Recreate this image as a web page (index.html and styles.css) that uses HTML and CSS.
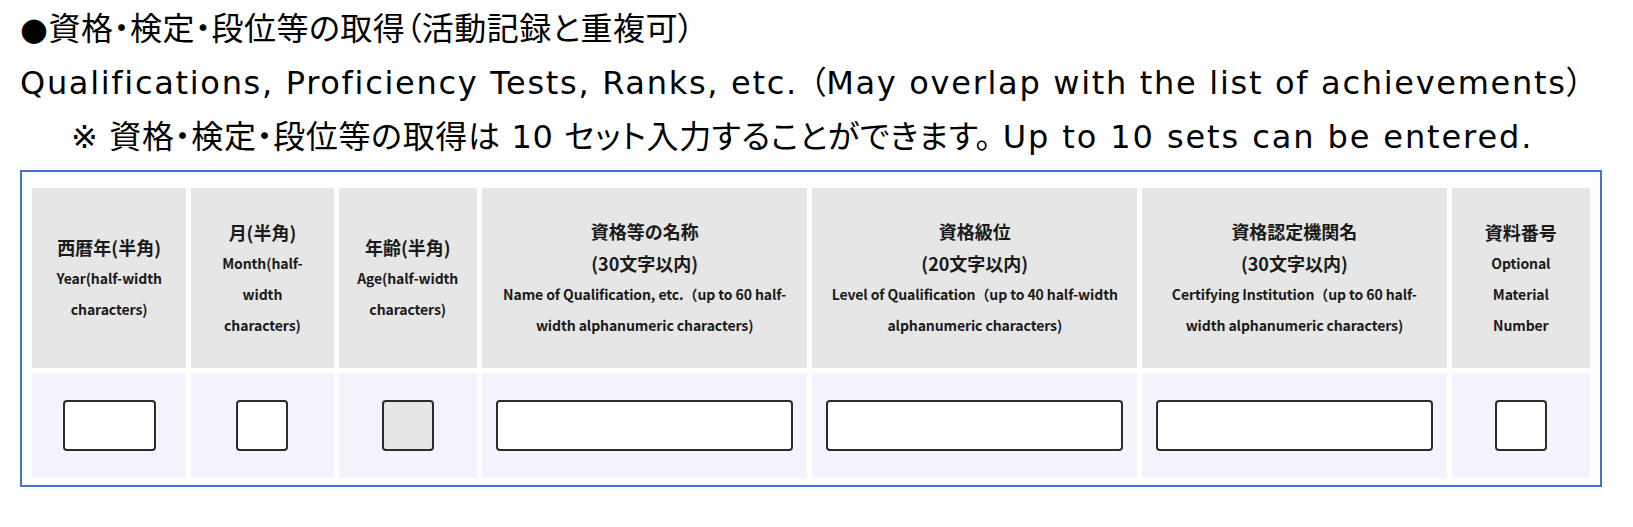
FILE: index.html
```html
<!DOCTYPE html>
<html lang="ja">
<head>
<meta charset="utf-8">
<title>資格・検定・段位等の取得</title>
<link rel="stylesheet" href="styles.css">
</head>
<body>
<div class="intro">
  <div class="line">●資格・検定・段位等の取得（活動記録と重複可）</div>
  <div class="line"><span class="lat">Qualifications, Proficiency Tests, Ranks, etc. </span>（<span class="lat">May overlap with the list of achievements</span>）</div>
  <div class="line note">※ 資格・検定・段位等の取得は 10 セット入力することができます。 <span class="lat">Up to 10 sets can be entered.</span></div>
</div>
<div class="box">
  <table class="grid">
    <colgroup>
      <col class="c1"><col class="c2"><col class="c3"><col class="c4"><col class="c5"><col class="c6"><col class="c7">
    </colgroup>
    <thead>
      <tr class="head">
        <th><span class="jp">西暦年(半角)</span><span class="en">Year(half-width<br>characters)</span></th>
        <th><span class="jp">月(半角)</span><span class="en">Month(half-<br>width<br>characters)</span></th>
        <th><span class="jp">年齢(半角)</span><span class="en">Age(half-width<br>characters)</span></th>
        <th><span class="jp">資格等の名称</span><span class="jp">(30文字以内)</span><span class="en">Name of Qualification, etc.（up to 60 half-<br>width alphanumeric characters)</span></th>
        <th><span class="jp">資格級位</span><span class="jp">(20文字以内)</span><span class="en">Level of Qualification（up to 40 half-width<br>alphanumeric characters)</span></th>
        <th><span class="jp">資格認定機関名</span><span class="jp">(30文字以内)</span><span class="en">Certifying Institution（up to 60 half-<br>width alphanumeric characters)</span></th>
        <th><span class="jp">資料番号</span><span class="en">Optional<br>Material<br>Number</span></th>
      </tr>
    </thead>
    <tbody>
      <tr class="row">
        <td><input class="in in-year" type="text"></td>
        <td><input class="in in-small" type="text"></td>
        <td><input class="in in-small" type="text" disabled></td>
        <td><input class="in in-wide" type="text"></td>
        <td><input class="in in-wide" type="text"></td>
        <td><input class="in in-wide" type="text"></td>
        <td><input class="in in-small" type="text"></td>
      </tr>
    </tbody>
  </table>
</div>
</body>
</html>
```
FILE: styles.css
```css
html, body {
  margin: 0;
  padding: 0;
  background: #ffffff;
}
body {
  padding: 2px 31px 0 20px;
  color: #000;
  font-family: "DejaVu Sans", "Noto Sans CJK JP", sans-serif;
}
.intro .line {
  font-size: 32px;
  line-height: 54px;
  letter-spacing: 0.5px;
  white-space: nowrap;
  font-feature-settings: "palt";
}
.intro .lat {
  letter-spacing: 1.7px;
}
.intro .note {
  padding-left: 51px;
  letter-spacing: 0.65px;
}
.intro .note .lat {
  letter-spacing: 1.9px;
}
.box {
  margin-top: 6px;
  border: 2px solid #4472c4;
  padding: 11px 5px 2px 5px;
}
.grid {
  width: 100%;
  table-layout: fixed;
  border-collapse: separate;
  border-spacing: 5px;
  font-family: "Noto Sans CJK JP", sans-serif;
}
.c1 { width: 154px; }
.c2 { width: 142px; }
.c3 { width: 138px; }
.c4 { width: 325px; }
.c5 { width: 324px; }
.c6 { width: 304px; }
.c7 { width: 138px; }
.head th {
  height: 180px;
  padding: 0 4px;
  background: #e6e6e6;
  text-align: center;
  vertical-align: middle;
  font-weight: 700;
  color: #1a1a1a;
}
.jp {
  display: block;
  font-size: 18px;
  line-height: 32px;
}
.en {
  display: block;
  font-size: 14px;
  line-height: 31px;
  letter-spacing: -0.1px;
}
.row td {
  height: 105px;
  padding: 0;
  background: #f2f3fc;
  text-align: center;
  vertical-align: middle;
}
.in {
  box-sizing: border-box;
  height: 51px;
  margin: 0;
  padding: 0 8px;
  border: 2px solid #2b2b2b;
  border-radius: 4px;
  background: #fff;
  font-size: 16px;
  vertical-align: middle;
}
.in:disabled {
  background: #e6e6e6;
}
.in-year { width: 93px; }
.in-small { width: 52px; }
.in-wide { width: calc(100% - 28px); }
```
